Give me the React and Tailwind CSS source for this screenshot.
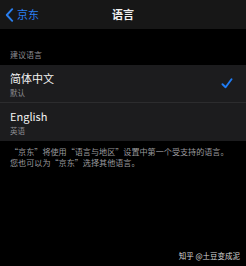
import React from 'react'

const font = { fontFamily: '"Noto Sans CJK SC", "Noto Sans", sans-serif' }

function Row({ title, sub, checked, last }) {
  return (
    <div className={`flex items-center justify-between h-[38px] pl-[10px] pr-[13px] bg-[#1c1c1e] ${last ? '' : 'border-b border-[#2c2c2e]'}`}>
      <div className="flex flex-col pt-[1px]">
        <span className="text-[11px] leading-[14px] text-[#f2f2f2]">{title}</span>
        <span className="text-[7.5px] leading-[10px] mt-[3px] text-[#8e8e93]">{sub}</span>
      </div>
      {checked && (
        <svg width="12" height="11" viewBox="0 0 12 11" fill="none">
          <path d="M1.5 6.2 L4.6 9.2 L10.5 1.2" stroke="#1f7cf5" strokeWidth="1.9" strokeLinecap="round" strokeLinejoin="round" />
        </svg>
      )}
    </div>
  )
}

export default function App() {
  return (
    <div className="relative w-[246px] h-[266px] bg-black overflow-hidden" style={font}>
      {/* 导航栏 */}
      <div className="relative flex items-center h-[29px] bg-[#171717]">
        <div className="flex items-center pl-[5px] gap-[3px] text-[#2a7ff0]">
          <svg width="9" height="14" viewBox="0 0 9 14" fill="none">
            <path d="M7.2 1.2 L1.8 7 L7.2 12.8" stroke="#2a7ff0" strokeWidth="1.9" strokeLinecap="round" strokeLinejoin="round" />
          </svg>
          <span className="text-[11px] leading-none">京东</span>
        </div>
        <span className="absolute left-1/2 -translate-x-1/2 text-[11px] font-bold text-[#f0f0f0] leading-none">语言</span>
      </div>

      <div className="pt-[20px] pb-[4px] pl-[10px] text-[8px] leading-[12px] text-[#8e8e93]">建议语言</div>

      <Row title="简体中文" sub="默认" checked />
      <Row title="English" sub="英语" last />

      <div className="pt-[5px] px-[10px] text-[8.1px] leading-[11px] text-[#9a9a9e] whitespace-nowrap">
        <p>“京东”将使用“语言与地区”设置中第一个受支持的语言。</p>
        <p>您也可以为“京东”选择其他语言。</p>
      </div>

      <div className="absolute right-[6px] bottom-[7px] text-[7.5px] leading-none text-[#d8d8d8]">知乎 @土豆变成泥</div>
    </div>
  )
}
